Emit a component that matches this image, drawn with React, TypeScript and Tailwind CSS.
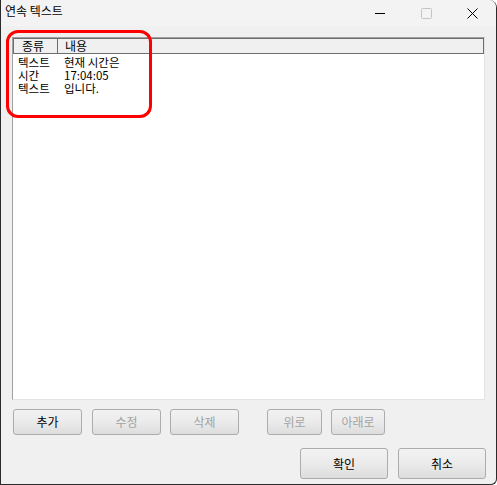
import React from 'react';

const font = { fontFamily: '"Noto Sans CJK KR", "Liberation Sans", sans-serif' };

const rows = [
  { kind: '텍스트', value: '현재 시간은' },
  { kind: '시간', value: '17:04:05' },
  { kind: '텍스트', value: '입니다.' },
];

const Btn: React.FC<{ label: string; w: string; h?: string; disabled?: boolean; className?: string }> = ({
  label, w, h = 'h-[26px]', disabled, className = '',
}) => (
  <button
    className={`${w} ${h} ${className} flex items-center justify-center rounded-[3px] border border-[#acacac] bg-gradient-to-b from-[#f2f2f2] via-[#ebebeb] to-[#dddddd] text-[12px] leading-none ${
      disabled ? 'text-[#a3a3a3]' : 'text-black'
    }`}
  >
    {label}
  </button>
);

export default function App() {
  return (
    <div
      style={font}
      className="relative w-[497px] h-[485px] bg-[#f0f0f0] border border-[#2b2b2b] border-t-0 rounded-tr-[8px] rounded-br-[6px] overflow-hidden"
    >
      {/* title bar */}
      <div className="h-[26px] bg-[#f3f3f3] flex items-start relative">
        <span className="pl-[4px] pt-[4px] text-[12px] leading-[14px] text-black">연속 텍스트</span>
        <div className="absolute right-0 top-0 h-[26px] flex items-center">
          <div className="w-[46px] h-[26px] flex items-center justify-center">
            <svg width="10" height="10" viewBox="0 0 10 10">
              <path d="M0 5.5h10" stroke="#000" strokeWidth="1" />
            </svg>
          </div>
          <div className="w-[46px] h-[26px] flex items-center justify-center">
            <svg width="11" height="11" viewBox="0 0 11 11">
              <rect x="0.5" y="0.5" width="10" height="10" rx="1" fill="none" stroke="#c4c4c4" strokeWidth="1" />
            </svg>
          </div>
          <div className="w-[46px] h-[26px] flex items-center justify-center mr-[1px]">
            <svg width="11" height="11" viewBox="0 0 11 11">
              <path d="M0.5 0.5l10 10M10.5 0.5l-10 10" stroke="#000" strokeWidth="1" />
            </svg>
          </div>
        </div>
      </div>

      {/* list view */}
      <div className="ml-[11px] mt-[11px] w-[473px] h-[363px] border-l border-t border-[#a0a0a0] border-r-[#e3e3e3] border-b-[#e3e3e3] border-r border-b bg-white">
        <div className="h-[16px] flex bg-[#f0f0f0] border border-[#6d6d6d] text-[12px] leading-[14px] text-black">
          <div className="w-[44px] pl-[8px] border-r border-[#6d6d6d]">종류</div>
          <div className="flex-1 pl-[7px]">내용</div>
        </div>
        <div className="pt-[2px] text-[11.5px] leading-[13px] text-black">
          {rows.map((r, i) => (
            <div key={i} className="flex h-[13px]">
              <div className="w-[51px] pl-[5px]">{r.kind}</div>
              <div>{r.value}</div>
            </div>
          ))}
        </div>
      </div>

      {/* edit buttons */}
      <div className="flex mt-[9px] ml-[12px]">
        <Btn label="추가" w="w-[69px]" />
        <Btn label="수정" w="w-[69px]" disabled className="ml-[10px]" />
        <Btn label="삭제" w="w-[69px]" disabled className="ml-[9px]" />
        <Btn label="위로" w="w-[55px]" disabled className="ml-[28px]" />
        <Btn label="아래로" w="w-[54px]" disabled className="ml-[9px]" />
      </div>

      {/* dialog buttons */}
      <div className="flex mt-[13px] ml-[299px]">
        <Btn label="확인" w="w-[88px]" h="h-[31px]" />
        <Btn label="취소" w="w-[88px]" h="h-[31px]" className="ml-[10px]" />
      </div>

      {/* annotation */}
      <div className="absolute left-[5px] top-[30px] w-[146px] h-[88px] border-[3px] border-[#ff0000] rounded-[12px]" />
    </div>
  );
}
